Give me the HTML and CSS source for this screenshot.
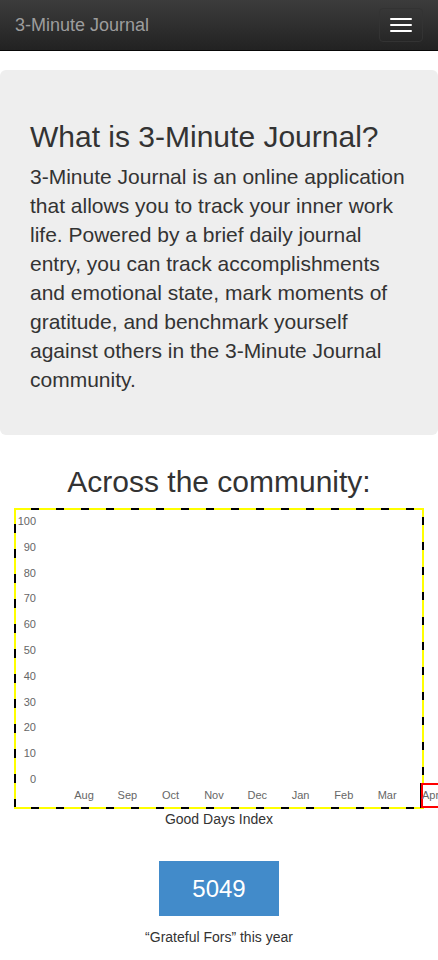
FILE: index.html
```html
<!DOCTYPE html>
<html lang="en">
<head>
<meta charset="utf-8">
<title>3-Minute Journal</title>
<link rel="stylesheet" href="styles.css">
</head>
<body>
<nav class="navbar">
  <a class="brand" href="#">3-Minute Journal</a>
  <button class="toggle" type="button" aria-label="Toggle navigation">
    <span class="bar"></span>
    <span class="bar"></span>
    <span class="bar"></span>
  </button>
</nav>

<div class="jumbotron">
  <h1 class="jumbo-title">What is 3-Minute Journal?</h1>
  <p class="jumbo-text">3-Minute Journal is an online application that allows you to track your inner work life. Powered by a brief daily journal entry, you can track accomplishments and emotional state, mark moments of gratitude, and benchmark yourself against others in the 3-Minute Journal community.</p>
</div>

<section class="community">
  <h2 class="community-title">Across the community:</h2>
  <div class="chart">
    <div class="yaxis">
      <span class="ytick">100</span>
      <span class="ytick">90</span>
      <span class="ytick">80</span>
      <span class="ytick">70</span>
      <span class="ytick">60</span>
      <span class="ytick">50</span>
      <span class="ytick">40</span>
      <span class="ytick">30</span>
      <span class="ytick">20</span>
      <span class="ytick">10</span>
      <span class="ytick">0</span>
    </div>
    <div class="xaxis">
      <span class="xtick">Aug</span>
      <span class="xtick">Sep</span>
      <span class="xtick">Oct</span>
      <span class="xtick">Nov</span>
      <span class="xtick">Dec</span>
      <span class="xtick">Jan</span>
      <span class="xtick">Feb</span>
      <span class="xtick">Mar</span>
    </div>
    <div class="overflow-tick">Apr</div>
  </div>
  <div class="chart-caption">Good Days Index</div>

  <div class="stat">
    <a class="stat-btn" href="#">5049</a>
    <div class="stat-caption">“Grateful Fors” this year</div>
  </div>
</section>
</body>
</html>
```

FILE: styles.css
```css
* { box-sizing: border-box; }

html, body {
  margin: 0;
  padding: 0;
}

body {
  font-family: "Liberation Sans", Helvetica, Arial, sans-serif;
  font-size: 14px;
  line-height: 1.42857;
  color: #333;
  background: #fff;
  overflow-x: hidden;
}

/* Navbar */
.navbar {
  height: 51px;
  display: flex;
  justify-content: space-between;
  align-items: flex-start;
  background: linear-gradient(to bottom, #3c3c3c 0%, #222 100%);
  border-bottom: 1px solid #080808;
}

.brand {
  padding: 15px;
  font-size: 18px;
  line-height: 20px;
  color: #9d9d9d;
  text-decoration: none;
}

.toggle {
  margin: 8px 15px 0 0;
  padding: 9px 10px;
  border: 1px solid #333;
  border-radius: 4px;
  background: transparent;
  display: flex;
  flex-direction: column;
  gap: 4px;
}

.bar {
  display: block;
  width: 22px;
  height: 2px;
  border-radius: 1px;
  background: #fff;
}

/* Jumbotron */
.jumbotron {
  margin-top: 19px;
  padding: 30px 30px 30px;
  background: #eee;
  border-radius: 6px;
}

.jumbo-title {
  margin: 20px 0 10px;
  font-size: 30px;
  font-weight: 500;
  line-height: 33px;
  color: #333;
}

.jumbo-text {
  margin: -1px 0 11px;
  font-size: 21px;
  font-weight: 200;
  line-height: 29px;
}

/* Community */
.community {
  margin-top: 30px;
  padding: 0 14px;
  overflow: hidden;
  text-align: center;
}

.community-title {
  margin: 0 0 10px;
  font-size: 30px;
  font-weight: 500;
  line-height: 33px;
}

.chart {
  position: relative;
  height: 301px;
  border: 2px solid transparent;
  display: flex;
  flex-direction: column;
  background:
    repeating-linear-gradient(to right, #ff0 0 17px, #000 17px 25px) top left / 100% 2px no-repeat border-box,
    repeating-linear-gradient(to right, #ff0 0 17px, #000 17px 25px) bottom left / 100% 2px no-repeat border-box,
    repeating-linear-gradient(to bottom, #ff0 0 16px, #000 16px 25px) top left / 2px 100% no-repeat border-box,
    repeating-linear-gradient(to bottom, #ff0 0 9px, #000 9px 17px, #ff0 17px 25px) top right / 2px 100% no-repeat border-box,
    #fff;
}

.yaxis {
  display: flex;
  flex-direction: column;
  width: 20px;
  margin-top: -1px;
}

.ytick {
  display: block;
  height: 25.8px;
  line-height: 25.8px;
  font-size: 11px;
  color: #666;
  text-align: right;
}

.xaxis {
  display: flex;
  margin: -5px 0 0 46.4px;
}

.xtick {
  flex: 0 0 43.3px;
  font-size: 11px;
  line-height: 14px;
  color: #666;
  text-align: center;
}

.overflow-tick {
  position: absolute;
  left: 405px;
  top: 273px;
  width: 60px;
  height: 25px;
  padding-left: 0;
  border: 2px solid #f00;
  box-shadow: -1px 0 0 #000;
  font-size: 11px;
  line-height: 20px;
  color: #666;
  text-align: left;
  text-indent: -1px;
  background: #fff;
}

.chart-caption {
  margin-top: 0;
  font-size: 14px;
  line-height: 20px;
}

.stat {
  margin-top: 32px;
  display: flex;
  flex-direction: column;
  align-items: center;
}

.stat-btn {
  display: block;
  width: 120px;
  height: 55px;
  line-height: 55px;
  font-size: 24px;
  color: #fff;
  background: #428bca;
  text-decoration: none;
}

.stat-caption {
  margin-top: 11px;
  font-size: 14px;
  line-height: 20px;
}
```
